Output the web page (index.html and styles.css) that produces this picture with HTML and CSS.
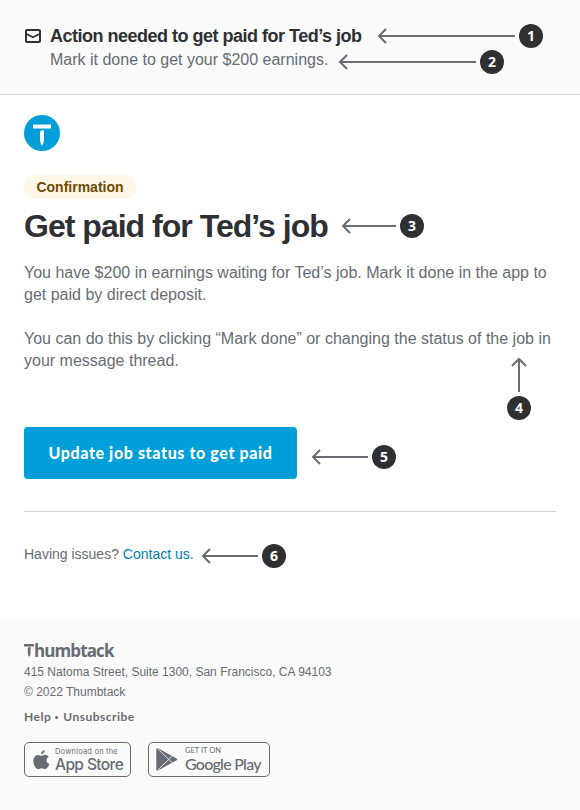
FILE: index.html
```html
<!DOCTYPE html>
<html lang="en">
<head>
<meta charset="utf-8">
<title>Get paid for Ted’s job</title>
<link rel="stylesheet" href="styles.css">
</head>
<body>
<header class="preview">
  <svg class="mail" width="16" height="14" viewBox="0 0 16 14" fill="none" stroke="#2f3033" stroke-width="2" stroke-linejoin="round"><rect x="1" y="1" width="14" height="12" rx="1"/><path d="M1.500 5 8 8.200 14.500 5" stroke-width="1.800"/></svg>
  <div>
    <div class="subject">Action needed to get paid for Ted’s job</div>
    <div class="preheader">Mark it done to get your $200 earnings.</div>
  </div>
</header>
<main class="message">
  <svg class="logo" width="36" height="36" viewBox="0 0 36 36"><circle cx="18" cy="18" r="18" fill="#009fd9"/><path d="M9 9.500h18v4H9zM16 17.500q0-2.500 4-2.500v9.500q0 3.500-2 6.200-2-2.700-2-6.200z" fill="#fff"/></svg>
  <div class="pill">Confirmation</div>
  <h1>Get paid for Ted’s job</h1>
  <p>You have $200 in earnings waiting for Ted’s job. Mark it done in the app to<br>get paid by direct deposit.</p>
  <p>You can do this by clicking “Mark done” or changing the status of the job in<br>your message thread.</p>
  <a class="button">Update job status to get paid</a>
  <hr>
  <div class="contact">Having issues? <a>Contact us.</a></div>
</main>
<footer>
  <div class="brand"><svg width="10" height="13" viewBox="0 0 10 13" fill="#676d73"><path d="M0 0h10v2.400H0zM3.800 4q0-1 2.700-1v6q0 2-1.350 4Q3.800 11 3.800 9z"/></svg><span>humbtack</span></div>
  <div class="address">415 Natoma Street, Suite 1300, San Francisco, CA 94103</div>
  <div class="copyright">© 2022 Thumbtack</div>
  <div class="links"><span>Help</span><i></i><span>Unsubscribe</span></div>
  <div class="stores">
    <div class="store apple">
      <svg width="17" height="20" viewBox="0 0 17 20" fill="#676d73"><path d="M11.700 0c.2 2-1.500 4.200-3.600 4.200C7.900 2.300 9.700.300 11.700 0zM12 4.700c1.600 0 2.900.8 3.700 2-3.200 1.900-2.700 6.200.700 7.400-.8 2.300-2.400 5-4.200 5-1.400 0-1.900-.8-3.500-.8s-2.200.8-3.500.8C3 19.100.3 14.900.3 11 .3 7.200 2.500 4.900 5 4.900c1.500 0 2.600.9 3.500.9 1 0 2.100-1.100 3.500-1.100z"/></svg>
      <div><small>Download on the</small><b>App Store</b></div>
    </div>
    <div class="store google">
      <svg width="22" height="25" viewBox="0 0 22 25"><path d="M1.200.7 20.600 11.400q1.300.9 0 1.800L1.200 24Q.3 23.500.3 22.400V2.300Q.3 1.200 1.200.7z" fill="#676d73"/><path d="M.7.700 16.300 16M.7 24 16.300 9" stroke="#fafafa" stroke-width=".8"/></svg>
      <div><small>GET IT ON</small><b>Google Play</b></div>
    </div>
  </div>
</footer>

<div class="note n1"><svg width="138" height="16"><path d="M9 1 2 8l7 7M2 8h136"/></svg><em>1</em></div>
<div class="note n2"><svg width="138" height="16"><path d="M9 1 2 8l7 7M2 8h136"/></svg><em>2</em></div>
<div class="note n3"><svg width="55" height="16"><path d="M9 1 2 8l7 7M2 8h53"/></svg><em>3</em></div>
<div class="note up n4"><svg width="16" height="35"><path d="M1 9l7-7 7 7M8 2v33"/></svg><em>4</em></div>
<div class="note n5"><svg width="57" height="16"><path d="M9 1 2 8l7 7M2 8h55"/></svg><em>5</em></div>
<div class="note n6"><svg width="57" height="16"><path d="M9 1 2 8l7 7M2 8h55"/></svg><em>6</em></div>
</body>
</html>
```
FILE: styles.css
```css
* { box-sizing: border-box; }
body { margin: 0; position: relative; height: 810px; overflow: hidden; background: #fff; color: #676d73; font-family: "Liberation Sans", Arial, sans-serif; display: flex; flex-direction: column; white-space: nowrap; }
svg { display: block; flex: none; }
.preview { height: 95px; flex: none; padding: 24px 24px 0 25px; background: #fafafa; border-bottom: 1px solid #d3d4d5; display: flex; gap: 9px; }
.mail { margin-top: 5px; }
.subject { font-size: 18px; font-weight: 700; line-height: 24px; color: #2f3033; letter-spacing: -.5px; }
.preheader { font-size: 16px; line-height: 24px; }
.message { height: 525px; flex: none; padding: 20px 24px 0; }
.pill { width: 112px; height: 24px; margin-top: 24px; border-radius: 12px; background: #fef6e7; color: #704b02; font-size: 14px; font-weight: 700; line-height: 24px; text-align: center; }
h1 { margin: 7px 0 16px; font-size: 32px; line-height: 40px; font-weight: 700; color: #2f3033; letter-spacing: -.98px; }
p { margin: 0 0 22px; font-size: 16px; line-height: 22px; }
.button { display: flex; align-items: center; justify-content: center; width: 273px; height: 52px; margin-top: 55px; border-radius: 4px; background: #009fd9; color: #fff; font: 900 16px/24px Lato, sans-serif; letter-spacing: .62px; }
hr { margin: 32px 0 0; border: 0; height: 1px; background: #d3d4d5; }
.contact { margin-top: 32px; font-size: 14px; line-height: 20px; }
.contact a { color: #007fad; }
footer { flex: 1; background: #fafafa; padding: 24px 24px 0; }
.brand { display: flex; height: 13px; align-items: flex-start; font: 700 17px/18px "Open Sans", sans-serif; letter-spacing: -.9px; }
.brand span { margin-top: -2px; }
.address, .copyright { font-size: 12px; line-height: 20px; }
.address { margin-top: 5px; }
.links { display: flex; align-items: center; margin-top: 7px; font: 700 12px/16px Lato, sans-serif; letter-spacing: .48px; }
.links i { width: 3px; height: 3px; border-radius: 50%; background: #676d73; margin: 0 5px 0 4px; }
.stores { display: flex; gap: 17px; margin-top: 17px; }
.store { height: 35px; border: 1px solid #676d73; border-radius: 5px; display: flex; align-items: center; }
.store small, .store b { display: block; }
.apple { width: 107px; padding-left: 8px; gap: 5px; font-family: Inter, sans-serif; }
.apple small { font-size: 7.5px; line-height: 9px; letter-spacing: .2px; }
.apple b { font-size: 15.5px; line-height: 17px; font-weight: 500; letter-spacing: -.6px; }
.google { width: 122px; padding-left: 7px; gap: 7px; font-family: Lato, sans-serif; }
.google small { font-size: 7.5px; line-height: 9px; }
.google b { font-size: 16px; line-height: 18px; font-weight: 500; letter-spacing: -.75px; }
.note { position: absolute; display: flex; align-items: center; gap: 4px; }
.note path { fill: none; stroke: #676d73; stroke-width: 2; }
.note em { width: 24px; height: 24px; border-radius: 50%; background: #2f3033; color: #fff; text-align: center; font: 700 14px/24px "Noto Sans", sans-serif; }
.up { flex-direction: column; }
.n1 { left: 377px; top: 24px; }
.n2 { left: 338px; top: 50px; }
.n3 { left: 341px; top: 214px; }
.n4 { left: 507px; top: 357px; }
.n5 { left: 311px; top: 445px; }
.n6 { left: 201px; top: 544px; }
```
